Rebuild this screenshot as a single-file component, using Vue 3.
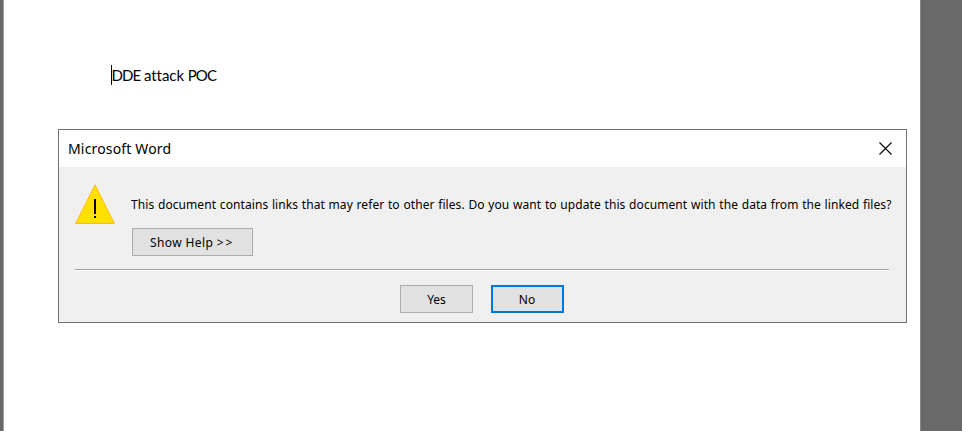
<script setup>
const title = 'Microsoft Word'
const message = 'This document contains links that may refer to other files. Do you want to update this document with the data from the linked files?'
</script>

<template>
  <main class="desktop">
    <section class="page">
      <div class="line"><span class="caret"></span><span class="doc-text"><span class="caps">DDE</span> attack <span class="caps">POC</span></span></div>
      <div class="dialog" role="dialog">
        <header class="titlebar">
          <span class="title">{{ title }}</span>
          <svg class="close" width="13" height="13" viewBox="0 0 13 13">
            <path d="M.5 .5 12.5 12.5M12.5 .5 .5 12.5" fill="none" stroke="#000" stroke-width="1.1" />
          </svg>
        </header>
        <div class="content">
          <div class="info">
            <svg class="warning" width="40" height="40" viewBox="0 0 40 40">
              <path d="M20 .8 39.4 39.5H.6Z" fill="#ffe100" stroke="#ffb914" stroke-width="1" />
              <path d="M19 15h2v15h-2zM19 32h2v2h-2z" fill="#000" />
            </svg>
            <div class="details">
              <p class="message">{{ message }}</p>
              <button class="btn help">Show Help <span class="chevrons">&gt;&gt;</span></button>
            </div>
          </div>
          <div class="rule"></div>
          <footer class="actions">
            <button class="btn choice">Yes</button>
            <button class="btn choice primary">No</button>
          </footer>
        </div>
      </div>
    </section>
  </main>
</template>

<style>
body { margin: 0; overflow: hidden; }
</style>

<style scoped>
* { box-sizing: border-box; }
.desktop {
  height: 431px;
  width: 962px;
  background: #696969;
  padding-left: 3px;
}
.page {
  width: 918px;
  height: 431px;
  background: #fff;
  border-left: 1px solid #a0a0a0;
  border-right: 1px solid #858585;
  padding: 65px 0 0 54px;
}
.line {
  display: flex;
  height: 20px;
  padding-left: 53px;
  margin-bottom: 44px;
}
.caret { width: 1px; height: 20px; background: #000; }
.doc-text {
  font: 15px/20px Lato, sans-serif;
  letter-spacing: -.05px;
  margin-left: -.5px;
  color: #000;
  white-space: nowrap;
}
.caps { letter-spacing: -.95px; }
.dialog {
  width: 849px;
  height: 194px;
  border: 1px solid #707070;
  background: #f0f0f0;
  font-family: "Noto Sans", sans-serif;
  color: #000;
}
.titlebar {
  height: 37px;
  background: #fff;
  display: flex;
  align-items: center;
  justify-content: space-between;
  padding: 0 15px 0 9px;
}
.title { font-size: 14px; line-height: 20px; letter-spacing: .16px; white-space: nowrap; }
.close { display: block; margin: 0 -.5px 1px 0; }
.content { padding: 17px 17px 0 16px; }
.info { display: flex; height: 85px; }
.warning { flex: none; }
.details { padding: 11px 0 0 16px; }
.message {
  margin: 0 0 14px;
  font-size: 12px;
  line-height: 19px;
  letter-spacing: .08px;
  word-spacing: .48px;
  white-space: nowrap;
}
.btn {
  font: 12px/18px "Noto Sans", sans-serif;
  color: #000;
  background: #e1e1e1;
  border: 1px solid #adadad;
  border-radius: 0;
  padding: 1px 0 0;
  height: 28px;
  display: block;
}
.help { width: 121px; margin-left: 1px; padding-right: 1px; letter-spacing: .4px; }
.chevrons { letter-spacing: 1.8px; }
.rule {
  height: 2px;
  background: #a0a0a0;
  border-bottom: 1px solid #fff;
}
.actions {
  display: flex;
  gap: 18px;
  padding: 14px 0 0 325px;
}
.choice { width: 73px; }
.primary { border: 2px solid #0078d7; padding-right: 1px; }
</style>
